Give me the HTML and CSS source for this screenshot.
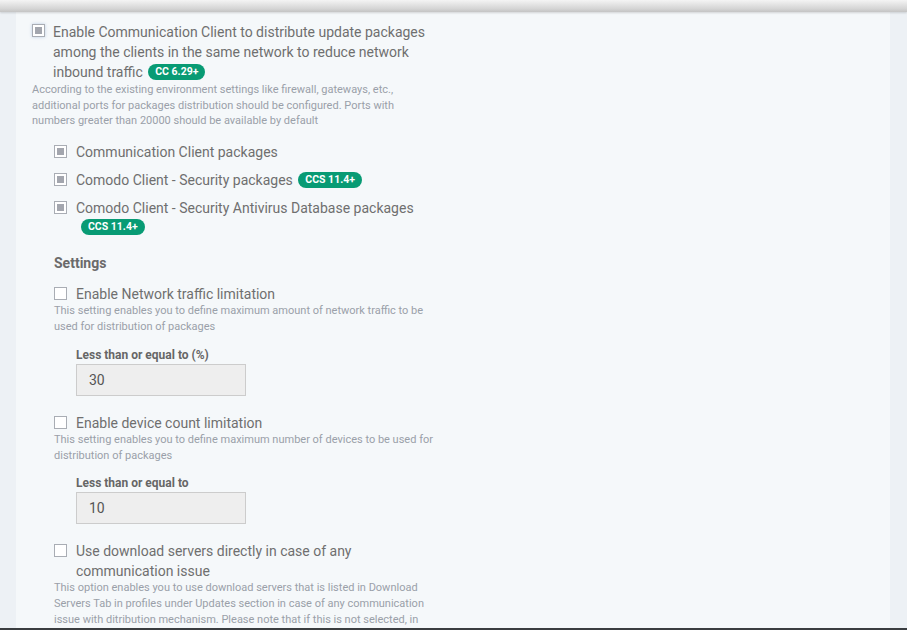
FILE: index.html
```html
<!DOCTYPE html>
<html lang="en">
<head>
    <meta charset="UTF-8">
    <title>Package distribution</title>
    <link rel="stylesheet" href="styles.css">
</head>
<body>
    <div class="torn-edge"></div>
    <div class="page">
        <div class="panel">
            <div class="option main-option">
                <span class="check checked"></span>
                <div class="option-text">
                    Enable Communication Client to distribute update packages among the clients in the same network to reduce network inbound traffic <span class="badge">CC 6.29+</span>
                </div>
            </div>
            <p class="hint hint-main">According to the existing environment settings like firewall, gateways, etc., additional ports for packages distribution should be configured. Ports with numbers greater than 20000 should be available by default</p>

            <div class="sub-block">
                <div class="option sub-option">
                    <span class="check checked"></span>
                    <div class="option-text">Communication Client packages</div>
                </div>
                <div class="option sub-option">
                    <span class="check checked"></span>
                    <div class="option-text">Comodo Client - Security packages <span class="badge">CCS 11.4+</span></div>
                </div>
                <div class="option sub-option">
                    <span class="check checked"></span>
                    <div class="option-text">Comodo Client - Security Antivirus Database packages<br><span class="badge badge-wrap">CCS 11.4+</span></div>
                </div>

                <h4 class="settings-title">Settings</h4>

                <div class="option">
                    <span class="check"></span>
                    <div class="option-text">Enable Network traffic limitation</div>
                </div>
                <p class="hint">This setting enables you to define maximum amount of network traffic to be used for distribution of packages</p>
                <div class="field">
                    <label class="field-label">Less than or equal to (%)</label>
                    <div class="field-input">30</div>
                </div>

                <div class="option">
                    <span class="check"></span>
                    <div class="option-text">Enable device count limitation</div>
                </div>
                <p class="hint">This setting enables you to define maximum number of devices to be used for distribution of packages</p>
                <div class="field field-tight">
                    <label class="field-label">Less than or equal to</label>
                    <div class="field-input">10</div>
                </div>

                <div class="option">
                    <span class="check"></span>
                    <div class="option-text narrow">Use download servers directly in case of any communication issue</div>
                </div>
                <p class="hint">This option enables you to use download servers that is listed in Download Servers Tab in profiles under Updates section in case of any communication issue with ditribution mechanism. Please note that if this is not selected, in case of any communication issue the packages will not be downloaded</p>
            </div>
        </div>
    </div>
    <div class="bottom-line"></div>
</body>
</html>
```

FILE: styles.css
```css
html, body {
    margin: 0;
    height: 630px;
    overflow: hidden;
}
body {
    font-family: Roboto, "Noto Sans", sans-serif;
    background-color: #edf1f5;
    position: relative;
    color: #6f6f6f;
}
.torn-edge {
    position: absolute;
    top: 0;
    left: 0;
    right: 0;
    height: 12px;
    background: linear-gradient(#f4f4f4, #d6d6d6 70%, #c4c4c4);
    box-shadow: 0 1px 2px rgba(0,0,0,0.15);
    z-index: 2;
}
.page {
    padding: 0 17px 0 16px;
}
.panel {
    background-color: #f5f8fa;
    height: 630px;
    padding: 22px 16px 0 16px;
    box-sizing: border-box;
}
.option {
    display: flex;
    align-items: flex-start;
    font-size: 14px;
    line-height: 20px;
}
.check {
    flex: none;
    width: 11px;
    height: 11px;
    border: 1px solid #a9adb4;
    background: #fff;
    margin-top: 3px;
    margin-right: 9px;
    position: relative;
}
.check.checked::after {
    content: "";
    position: absolute;
    left: 2px;
    top: 2px;
    width: 7px;
    height: 7px;
    background: #a3a6ae;
}
.main-option .check {
    margin-top: 2px;
    margin-right: 8px;
    box-shadow: 0 0 3px rgba(120,150,200,0.45);
}
.option-text {
    max-width: 385px;
}
.option-text.narrow {
    max-width: 310px;
}
.badge {
    display: inline-block;
    background-color: #089b74;
    color: #fff;
    font-size: 10.5px;
    font-weight: bold;
    line-height: 14px;
    padding: 1px 7px 1px 7px;
    border-radius: 8px;
    vertical-align: 2px;
    margin-left: 2px;
}
.badge-wrap {
    margin-left: 5px;
    vertical-align: 3px;
}
.hint {
    margin: -1px 0 0 0;
    font-size: 11px;
    line-height: 15.8px;
    color: #9aa0a9;
    max-width: 384px;
}
.hint-main {
    margin-top: 0;
    line-height: 15.6px;
}
.sub-block {
    padding-left: 22px;
    padding-top: 13px;
}
.sub-option {
    margin-bottom: 8px;
}
.sub-option:nth-child(3) {
    margin-bottom: 0;
    line-height: 20px;
}
.settings-title {
    margin: 16px 0 12px 0;
    font-size: 14px;
    color: #6a6a6a;
    line-height: 18px;
}
.field {
    padding-left: 22px;
    margin-top: 13px;
    margin-bottom: 17px;
}
.field-tight {
    margin-top: 11px;
}
.field-label {
    display: block;
    font-size: 12px;
    font-weight: bold;
    color: #666;
    line-height: 16px;
    margin-bottom: 1px;
}
.field-input {
    width: 156px;
    height: 30px;
    background-color: #eeeeee;
    border: 1px solid #cccccc;
    font-size: 14px;
    line-height: 30px;
    padding-left: 12px;
    color: #555;
}
.bottom-line {
    position: absolute;
    left: 0;
    right: 0;
    bottom: 0;
    height: 2px;
    background: #3a3d40;
}
```
